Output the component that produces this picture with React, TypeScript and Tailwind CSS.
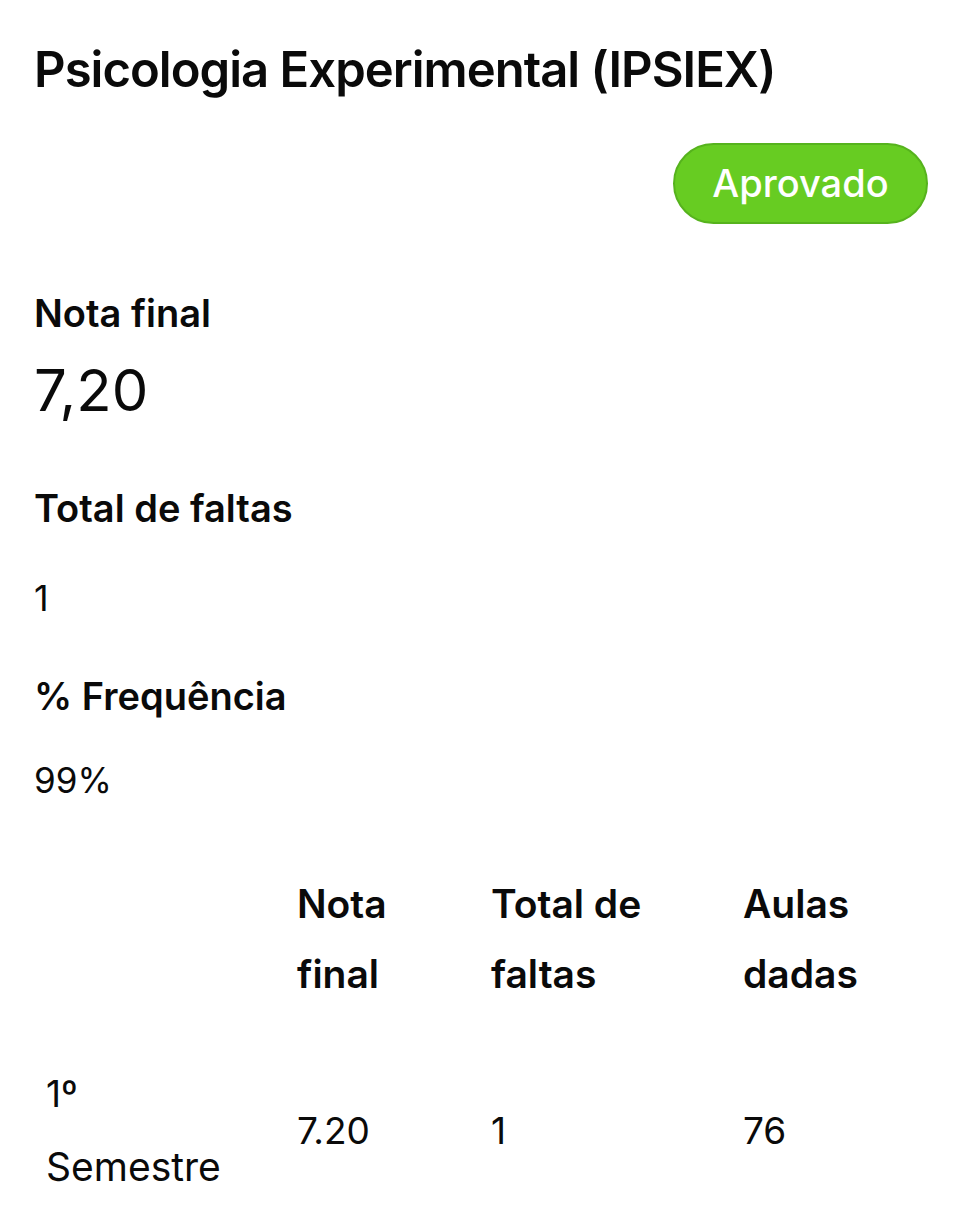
const rows = [{ label: ['1º', 'Semestre'], nota: '7.20', faltas: '1', aulas: '76' }];

function Label({ children }: { children: React.ReactNode }) {
  return <div className="text-[38px] leading-[48px] font-semibold">{children}</div>;
}

export default function App() {
  return (
    <div className="min-h-screen bg-white text-[#0a0a0a] font-['Inter','Noto_Sans',sans-serif] px-[34px] pt-[40px] pb-10">
      <h1 className="text-[49px] leading-[60px] font-semibold tracking-[-0.02em]">Psicologia Experimental (IPSIEX)</h1>

      <div className="flex justify-end mt-[43px] -mr-[2px]">
        <span className="flex items-center justify-center w-[255px] h-[81px] rounded-full bg-[#67cc22] border-2 border-[#56b31d] text-white text-[38px] font-medium">
          Aprovado
        </span>
      </div>

      <div className="mt-[65px]">
        <Label>Nota final</Label>
        <div className="mt-[18px] text-[58px] leading-[70px]">7,20</div>
      </div>
      <div className="mt-[59px]">
        <Label>Total de faltas</Label>
        <div className="mt-[42px] text-[36px] leading-[48px]">1</div>
      </div>
      <div className="mt-[50px]">
        <Label>% Frequência</Label>
        <div className="mt-[36px] text-[35px] leading-[48px]">99%</div>
      </div>

      <table className="mt-[65px] table-fixed w-[892px] text-left">
        <colgroup>
          <col className="w-[251px]" />
          <col className="w-[194px]" />
          <col className="w-[252px]" />
          <col />
        </colgroup>
        <thead>
          <tr className="text-[39px] leading-[70px] align-top">
            <th className="px-3 pb-[24px]"></th>
            <th className="px-3 pb-[24px] font-semibold">Nota<br />final</th>
            <th className="px-3 pb-[24px] font-semibold">Total de<br />faltas</th>
            <th className="px-3 pb-[24px] font-semibold">Aulas<br />dadas</th>
          </tr>
        </thead>
        <tbody>
          {rows.map((r) => (
            <tr key={r.nota} className="text-[37px] leading-[73px] align-middle">
              <td className="px-3 pt-[24px]">{r.label[0]}<br /><span className="text-[39px]">{r.label[1]}</span></td>
              <td className="px-3 pt-[24px]">{r.nota}</td>
              <td className="px-3 pt-[24px]">{r.faltas}</td>
              <td className="px-3 pt-[24px]">{r.aulas}</td>
            </tr>
          ))}
        </tbody>
      </table>
    </div>
  );
}
